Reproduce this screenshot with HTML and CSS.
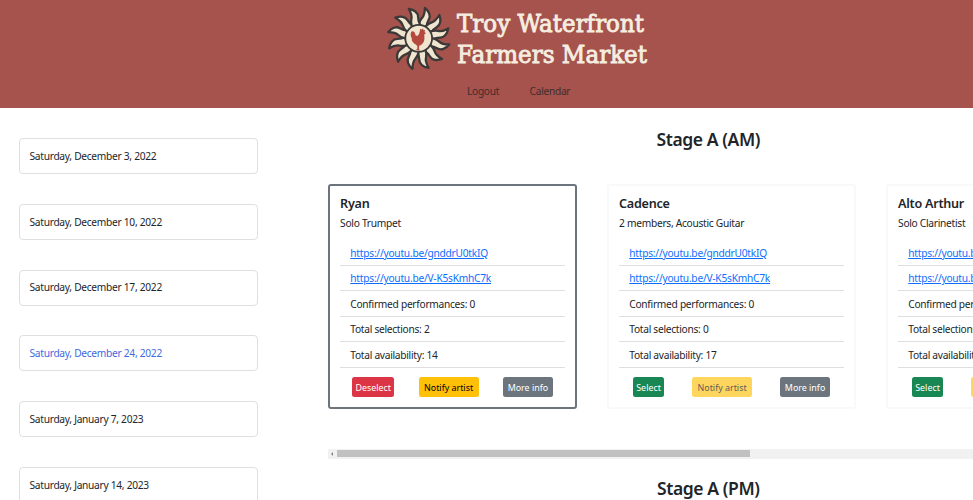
FILE: index.html
```
<!DOCTYPE html>
<html lang="en">
<head>
<meta charset="utf-8">
<title>Troy Waterfront Farmers Market</title>
<link rel="stylesheet" href="styles.css">
</head>
<body>
<header class="header">
  <svg class="logo" width="264" height="72" viewBox="384 2 264 72" role="img" aria-label="Troy Waterfront Farmers Market">
    <defs>
      <path id="ray" d="M-4,-12 C-4,-15 -4.600,-17 -2.800,-20.500 C-1,-24 -1.800,-27 -3,-31 C2,-29 5.200,-25 4.200,-21 C3.400,-18 3.600,-16 4.500,-12 Z"/>
    </defs>
    <g class="rays" id="rays" transform="translate(418.7 38.3)"></g>
    <circle class="disc" cx="418.7" cy="38.3" r="13.4"/>
    <path class="rooster" d="M411.500 31.500 c-1.500 2.500 -.8 5 .2 6.500 c-.3 3 1.500 5.500 4.500 6.800 l1.200 1.700 l-.2 2.500 l-1.700 1.200 h4.500 l-1 -1.200 l.2 -3.300 c3.800 -1.200 5.500 -4.500 5.200 -8.500 l-.1 -3 l1.700 -.8 l-1.400 -1.500 l.5 -1.800 l-1.500 .1 l-.6 -1.700 l-1.400 .9 l-1.500 -.5 l-.3 2.500 c-.7 1.500 -.6 3.200 -2 4 c-1.500 .8 -2.300 .1 -2.500 -1.200 c-.3 -2 -2.200 -3.500 -3.800 -2.700z"/>
    <text class="logo-text" x="457" y="32" textLength="187" lengthAdjust="spacingAndGlyphs">Troy Waterfront</text>
    <text class="logo-text" x="457" y="63.300" textLength="190" lengthAdjust="spacingAndGlyphs">Farmers Market</text>
  </svg>
  <nav class="nav"><a>Logout</a><a>Calendar</a></nav>
</header>
<main class="main">
  <aside class="dates">
    <div class="date">Saturday, December 3, 2022</div>
    <div class="date">Saturday, December 10, 2022</div>
    <div class="date">Saturday, December 17, 2022</div>
    <div class="date active">Saturday, December 24, 2022</div>
    <div class="date">Saturday, January 7, 2023</div>
    <div class="date">Saturday, January 14, 2023</div>
  </aside>
  <section class="stages">
    <h2 class="stage">Stage A (AM)</h2>
    <div class="cards">
      <article class="card selected">
        <h3 class="name">Ryan</h3>
        <p class="kind">Solo Trumpet</p>
        <ul class="list">
          <li><a class="link">https://youtu.be/gnddrU0tkIQ</a></li>
          <li><a class="link">https://youtu.be/V-K5sKmhC7k</a></li>
          <li>Confirmed performances: 0</li>
          <li>Total selections: 2</li>
          <li>Total availability: 14</li>
        </ul>
        <div class="actions"><button class="btn red">Deselect</button><button class="btn yellow">Notify artist</button><button class="btn gray">More info</button></div>
      </article>
      <article class="card">
        <h3 class="name">Cadence</h3>
        <p class="kind">2 members, Acoustic Guitar</p>
        <ul class="list">
          <li><a class="link">https://youtu.be/gnddrU0tkIQ</a></li>
          <li><a class="link">https://youtu.be/V-K5sKmhC7k</a></li>
          <li>Confirmed performances: 0</li>
          <li>Total selections: 0</li>
          <li>Total availability: 17</li>
        </ul>
        <div class="actions"><button class="btn green">Select</button><button class="btn yellow off">Notify artist</button><button class="btn gray">More info</button></div>
      </article>
      <article class="card">
        <h3 class="name">Alto Arthur</h3>
        <p class="kind">Solo Clarinetist</p>
        <ul class="list">
          <li><a class="link">https://youtu.be/gnddrU0tkIQ</a></li>
          <li><a class="link">https://youtu.be/V-K5sKmhC7k</a></li>
          <li>Confirmed performances: 0</li>
          <li>Total selections: 0</li>
          <li>Total availability: 17</li>
        </ul>
        <div class="actions"><button class="btn green">Select</button><button class="btn yellow off">Notify artist</button><button class="btn gray">More info</button></div>
      </article>
    </div>
    <div class="scrollbar"><span class="arrow"></span><span class="thumb"></span></div>
    <h2 class="stage">Stage A (PM)</h2>
  </section>
</main>
<script src="rays.js"></script>
</body>
</html>
```
FILE: rays.js
```
const rays = document.getElementById("rays");
const count = 12;
for (let i = 0; i < count; i++) {
  const ray = document.createElementNS("http://www.w3.org/2000/svg", "use");
  ray.setAttribute("href", "#ray");
  ray.setAttribute("transform", `rotate(${17 + i * 360 / count})`);
  rays.appendChild(ray);
}
```
FILE: styles.css
```
* { box-sizing: border-box; }
body {
  margin: 0;
  height: 500px;
  overflow: hidden;
  background: #fff;
  color: #212529;
  font: 10.2px/15.3px "Noto Sans", sans-serif;
  letter-spacing: -0.28px;
}
.header {
  height: 108px;
  padding-top: 2px;
  background: #a5534c;
  display: flex;
  flex-direction: column;
}
.logo { display: block; margin-left: 384px; }
.rays { fill: #f0e6cf; stroke: #3b3838; stroke-width: 2.3; stroke-linejoin: round; }
.disc { fill: #f0e6cf; stroke: #3b3838; stroke-width: 1.8; }
.rooster { fill: #b5483f; }
.logo-text { font: 24.7px "DejaVu Serif", serif; fill: #f5eee0; stroke: #f5eee0; stroke-width: .9; letter-spacing: 0; }
.nav { display: flex; gap: 30.5px; margin: 10px 0 0 467px; color: #432b2b; letter-spacing: -.3px; }
.main { display: flex; width: 973px; }
.dates { width: 258px; padding: 30px 0 0 19px; flex: none; display: flex; flex-direction: column; gap: 29.8px; }
.date { height: 36px; flex: none; padding: 9.8px 9.5px; border: 1px solid #dfdfdf; border-radius: 4px; }
.active { color: #4169e1; }
.stages { flex: 1; min-width: 0; overflow: hidden; margin-left: 70.3px; padding-top: 20px; }
.stage { margin: 0; width: 760px; font-size: 17.5px; line-height: 22px; font-weight: 600; text-align: center; letter-spacing: -.4px; }
.cards { display: flex; gap: 30.4px; margin-top: 34px; }
.card { flex: none; width: 248.6px; height: 224.500px; padding: 10px 9.800px; border: 2px solid #f8f9fa; border-radius: 3px; }
.selected { border-color: #6c757d; }
.name { margin: 0; font-size: 12.6px; line-height: 15.3px; font-weight: 600; letter-spacing: -.25px; }
.kind { margin: 5px 0 0; }
.list { list-style: none; margin: 8.900px 0 0; padding: 0; }
.list li { height: 25.5px; padding: 5.300px 10.2px; border-bottom: 1px solid #dfdfdf; }
.link { color: #0d6efd; text-decoration: underline; letter-spacing: -.24px; }
.actions { display: flex; justify-content: space-around; margin-top: 9.500px; }
.btn { height: 19.500px; padding: 0; border: 0; border-radius: 2.5px; font: 8.9px/19px "Noto Sans", sans-serif; color: #fff; }
.red { width: 42px; background: #dc3545; }
.green { width: 31px; background: #198754; }
.yellow { width: 60px; background: #ffc107; color: #000; }
.gray { width: 50px; background: #6c757d; }
.off { opacity: .65; }
.scrollbar { display: flex; align-items: center; height: 9.500px; margin-top: 40.500px; background: #f1f1f1; }
.arrow { margin: 0 4px 0 3px; border: 2px solid transparent; border-right: 2.5px solid #858585; border-left: 0; }
.thumb { width: 413px; height: 7px; background: #c1c1c1; }
.scrollbar + .stage { margin-top: 18.5px; }
```
